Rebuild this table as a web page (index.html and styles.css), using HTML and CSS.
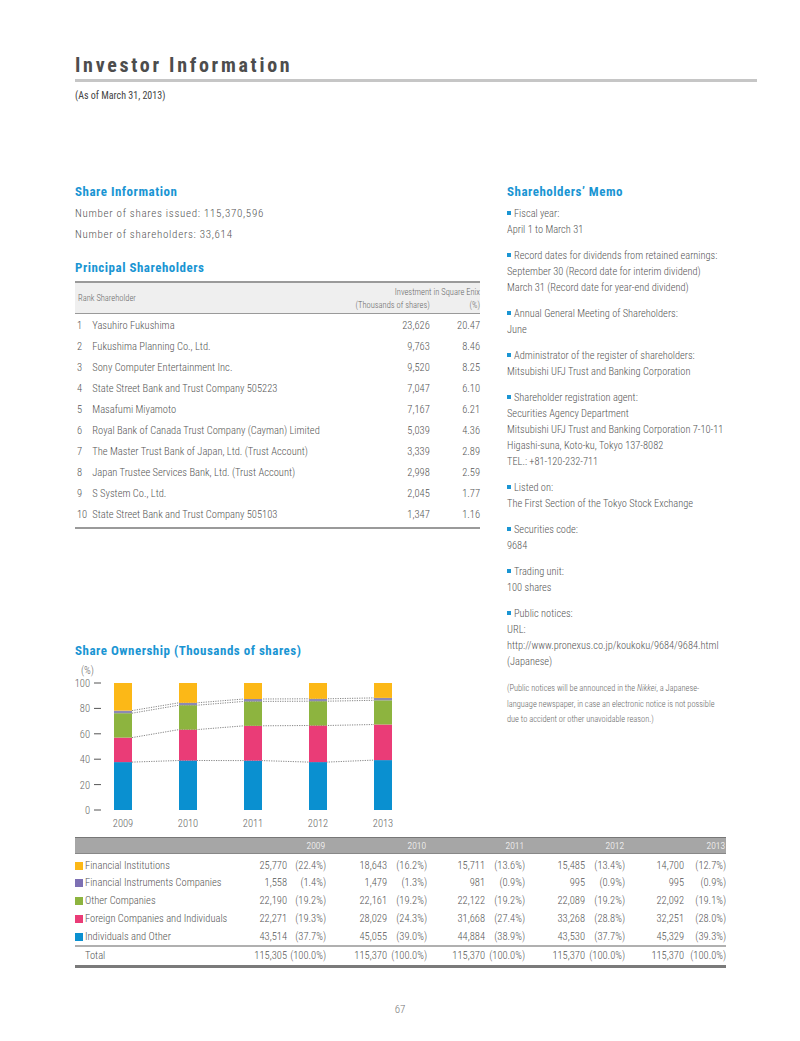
FILE: index.html
```html
<!DOCTYPE html>
<html lang="en">
<head>
<meta charset="utf-8">
<title>Investor Information</title>
<link rel="stylesheet" href="styles.css">
</head>
<body>
<div class="page">
  <header class="head">
    <h1 class="title">Investor Information</h1>
    <p class="asof">(As of March 31, 2013)</p>
  </header>

  <div class="cols">
    <section class="left">
      <h2 class="sec">Share Information</h2>
      <p class="info">Number of shares issued: 115,370,596</p>
      <p class="info">Number of shareholders: 33,614</p>

      <h2 class="sec sec-ps">Principal Shareholders</h2>
      <table class="ps">
        <thead>
          <tr class="ps-h1">
            <th class="ps-rankh" rowspan="2" colspan="2">Rank Shareholder</th>
            <th class="ps-inv" colspan="2">Investment in Square Enix</th>
          </tr>
          <tr class="ps-h2">
            <th class="num">(Thousands of shares)</th>
            <th class="num">(%)</th>
          </tr>
        </thead>
        <tbody>
          <tr><td class="rk">1</td><td class="nm">Yasuhiro Fukushima</td><td class="num">23,626</td><td class="num">20.47</td></tr>
          <tr><td class="rk">2</td><td class="nm">Fukushima Planning Co., Ltd.</td><td class="num">9,763</td><td class="num">8.46</td></tr>
          <tr><td class="rk">3</td><td class="nm">Sony Computer Entertainment Inc.</td><td class="num">9,520</td><td class="num">8.25</td></tr>
          <tr><td class="rk">4</td><td class="nm">State Street Bank and Trust Company 505223</td><td class="num">7,047</td><td class="num">6.10</td></tr>
          <tr><td class="rk">5</td><td class="nm">Masafumi Miyamoto</td><td class="num">7,167</td><td class="num">6.21</td></tr>
          <tr><td class="rk">6</td><td class="nm">Royal Bank of Canada Trust Company (Cayman) Limited</td><td class="num">5,039</td><td class="num">4.36</td></tr>
          <tr><td class="rk">7</td><td class="nm">The Master Trust Bank of Japan, Ltd. (Trust Account)</td><td class="num">3,339</td><td class="num">2.89</td></tr>
          <tr><td class="rk">8</td><td class="nm">Japan Trustee Services Bank, Ltd. (Trust Account)</td><td class="num">2,998</td><td class="num">2.59</td></tr>
          <tr><td class="rk">9</td><td class="nm">S System Co., Ltd.</td><td class="num">2,045</td><td class="num">1.77</td></tr>
          <tr><td class="rk">10</td><td class="nm">State Street Bank and Trust Company 505103</td><td class="num">1,347</td><td class="num">1.16</td></tr>
        </tbody>
      </table>

      <h2 class="sec sec-chart">Share Ownership (Thousands of shares)</h2>
      <svg class="chart" width="405" height="172" viewBox="0 0 405 172">
        <g class="axis">
          <text x="6" y="13">(%)</text>
          <text x="15" y="26" text-anchor="end">100</text>
          <text x="15" y="51.4" text-anchor="end">80</text>
          <text x="15" y="76.8" text-anchor="end">60</text>
          <text x="15" y="102.2" text-anchor="end">40</text>
          <text x="15" y="127.6" text-anchor="end">20</text>
          <text x="15" y="153" text-anchor="end">0</text>
        </g>
        <g class="ticks">
          <line x1="19" y1="22" x2="26" y2="22"/>
          <line x1="19" y1="47.4" x2="26" y2="47.4"/>
          <line x1="19" y1="72.8" x2="26" y2="72.8"/>
          <line x1="19" y1="98.2" x2="26" y2="98.2"/>
          <line x1="19" y1="123.6" x2="26" y2="123.6"/>
          <line x1="19" y1="149" x2="26" y2="149"/>
        </g>
        <g class="dots">
          <polyline points="57,101.1 104,99.5 122,99.5 169,99.6 187,99.6 234,101.1 252,101.1 299,99.1"/>
          <polyline points="57,76.6 104,68.6 122,68.6 169,64.8 187,64.8 234,64.5 252,64.5 299,63.5"/>
          <polyline points="57,52.2 104,44.2 122,44.2 169,40.4 187,40.4 234,40.2 252,40.2 299,39.3"/>
          <polyline points="57,49.6 104,41.8 122,41.8 169,38 187,38 234,37.8 252,37.8 299,36.9"/>
        </g>
        <g class="bar">
          <rect class="c-blue" x="39" y="101.1" width="18" height="47.9"/>
          <rect class="c-pink" x="39" y="76.6" width="18" height="24.5"/>
          <rect class="c-green" x="39" y="52.2" width="18" height="24.4"/>
          <rect class="c-purple" x="39" y="49.6" width="18" height="2.6"/>
          <rect class="c-yellow" x="39" y="22" width="18" height="27.6"/>
        </g>
        <g class="bar">
          <rect class="c-blue" x="104" y="99.5" width="18" height="49.5"/>
          <rect class="c-pink" x="104" y="68.6" width="18" height="30.9"/>
          <rect class="c-green" x="104" y="44.2" width="18" height="24.4"/>
          <rect class="c-purple" x="104" y="41.8" width="18" height="2.4"/>
          <rect class="c-yellow" x="104" y="22" width="18" height="19.8"/>
        </g>
        <g class="bar">
          <rect class="c-blue" x="169" y="99.6" width="18" height="49.4"/>
          <rect class="c-pink" x="169" y="64.8" width="18" height="34.8"/>
          <rect class="c-green" x="169" y="40.4" width="18" height="24.4"/>
          <rect class="c-purple" x="169" y="38" width="18" height="2.4"/>
          <rect class="c-yellow" x="169" y="22" width="18" height="16"/>
        </g>
        <g class="bar">
          <rect class="c-blue" x="234" y="101.1" width="18" height="47.9"/>
          <rect class="c-pink" x="234" y="64.5" width="18" height="36.6"/>
          <rect class="c-green" x="234" y="40.2" width="18" height="24.3"/>
          <rect class="c-purple" x="234" y="37.8" width="18" height="2.4"/>
          <rect class="c-yellow" x="234" y="22" width="18" height="15.8"/>
        </g>
        <g class="bar">
          <rect class="c-blue" x="299" y="99.1" width="18" height="49.9"/>
          <rect class="c-pink" x="299" y="63.5" width="18" height="35.6"/>
          <rect class="c-green" x="299" y="39.3" width="18" height="24.2"/>
          <rect class="c-purple" x="299" y="36.9" width="18" height="2.4"/>
          <rect class="c-yellow" x="299" y="22" width="18" height="14.9"/>
        </g>
        <g class="axis years">
          <text x="48" y="166" text-anchor="middle">2009</text>
          <text x="113" y="166" text-anchor="middle">2010</text>
          <text x="178" y="166" text-anchor="middle">2011</text>
          <text x="243" y="166" text-anchor="middle">2012</text>
          <text x="308" y="166" text-anchor="middle">2013</text>
        </g>
      </svg>
    </section>

    <section class="right">
      <h2 class="sec">Shareholders’ Memo</h2>
      <div class="memo">
        <p class="item"><span class="lbl">Fiscal year:</span><br>April 1 to March 31</p>
        <p class="item"><span class="lbl">Record dates for dividends from retained earnings:</span><br>September 30 (Record date for interim dividend)<br>March 31 (Record date for year-end dividend)</p>
        <p class="item"><span class="lbl">Annual General Meeting of Shareholders:</span><br>June</p>
        <p class="item"><span class="lbl">Administrator of the register of shareholders:</span><br>Mitsubishi UFJ Trust and Banking Corporation</p>
        <p class="item"><span class="lbl">Shareholder registration agent:</span><br>Securities Agency Department<br>Mitsubishi UFJ Trust and Banking Corporation 7-10-11<br>Higashi-suna, Koto-ku, Tokyo 137-8082<br>TEL.: +81-120-232-711</p>
        <p class="item"><span class="lbl">Listed on:</span><br>The First Section of the Tokyo Stock Exchange</p>
        <p class="item"><span class="lbl">Securities code:</span><br>9684</p>
        <p class="item"><span class="lbl">Trading unit:</span><br>100 shares</p>
        <p class="item"><span class="lbl">Public notices:</span><br>URL:<br>http://www.pronexus.co.jp/koukoku/9684/9684.html<br>(Japanese)</p>
        <p class="note">(Public notices will be announced in the <i>Nikkei</i>, a Japanese-<br>language newspaper, in case an electronic notice is not possible<br>due to accident or other unavoidable reason.)</p>
      </div>
    </section>
  </div>

  <table class="own">
    <colgroup>
      <col class="w-lbl"><col class="w-v1"><col class="w-p1"><col class="w-v2"><col class="w-p2"><col class="w-v3"><col class="w-p3"><col class="w-v4"><col class="w-p4"><col class="w-v5"><col class="w-p5">
    </colgroup>
    <thead>
      <tr><th></th><th colspan="2">2009</th><th colspan="2">2010</th><th colspan="2">2011</th><th colspan="2">2012</th><th colspan="2">2013</th></tr>
    </thead>
    <tbody>
      <tr><td><span class="sw c-yellow-bg"></span>Financial Institutions</td><td>25,770</td><td>(22.4%)</td><td>18,643</td><td>(16.2%)</td><td>15,711</td><td>(13.6%)</td><td>15,485</td><td>(13.4%)</td><td>14,700</td><td>(12.7%)</td></tr>
      <tr><td><span class="sw c-purple-bg"></span>Financial Instruments Companies</td><td>1,558</td><td>(1.4%)</td><td>1,479</td><td>(1.3%)</td><td>981</td><td>(0.9%)</td><td>995</td><td>(0.9%)</td><td>995</td><td>(0.9%)</td></tr>
      <tr><td><span class="sw c-green-bg"></span>Other Companies</td><td>22,190</td><td>(19.2%)</td><td>22,161</td><td>(19.2%)</td><td>22,122</td><td>(19.2%)</td><td>22,089</td><td>(19.2%)</td><td>22,092</td><td>(19.1%)</td></tr>
      <tr><td><span class="sw c-pink-bg"></span>Foreign Companies and Individuals</td><td>22,271</td><td>(19.3%)</td><td>28,029</td><td>(24.3%)</td><td>31,668</td><td>(27.4%)</td><td>33,268</td><td>(28.8%)</td><td>32,251</td><td>(28.0%)</td></tr>
      <tr><td><span class="sw c-blue-bg"></span>Individuals and Other</td><td>43,514</td><td>(37.7%)</td><td>45,055</td><td>(39.0%)</td><td>44,884</td><td>(38.9%)</td><td>43,530</td><td>(37.7%)</td><td>45,329</td><td>(39.3%)</td></tr>
      <tr class="total"><td class="tl">Total</td><td>115,305</td><td>(100.0%)</td><td>115,370</td><td>(100.0%)</td><td>115,370</td><td>(100.0%)</td><td>115,370</td><td>(100.0%)</td><td>115,370</td><td>(100.0%)</td></tr>
    </tbody>
  </table>

  <footer class="pno">67</footer>
</div>
</body>
</html>
```

FILE: styles.css
```css
* { box-sizing: border-box; }
html, body { margin: 0; padding: 0; background: #fff; }
body {
  font-family: "Roboto Condensed", "Open Sans", "Liberation Sans", sans-serif;
  font-weight: 300;
  color: #555;
  width: 800px;
}
.page { padding: 52px 43px 0 75px; }

.title {
  margin: 0;
  font-size: 20px;
  line-height: 26px;
  font-weight: bold;
  letter-spacing: 2.7px;
  color: #4d4d4d;
  padding-bottom: 1px;
  border-bottom: 3px solid #c6c6c6;
}
.asof { margin: 7px 0 0; font-size: 10px; line-height: 14px; color: #444; font-weight: 400; }

.cols {
  display: grid;
  grid-template-columns: 405px 250px;
  column-gap: 27px;
  margin-top: 81px;
}

.sec {
  margin: 0;
  font-size: 13px;
  line-height: 16px;
  font-weight: bold;
  color: #1a95d3;
  letter-spacing: 0.5px;
}
.info { margin: 0; font-size: 11px; line-height: 21px; letter-spacing: 0.7px; color: #555; font-weight: 300; }
.left .sec:first-child + .info { margin-top: 3px; }
.sec-ps { margin-top: 15px; margin-bottom: 5px; }

.ps { width: 405px; border-collapse: collapse; font-size: 10.5px; color: #555; }
.ps thead th { background: #efefef; font-weight: 300; font-size: 8.5px; color: #666; padding: 0; }
.ps-h1 th { border-top: 2px solid #9a9a9a; }
.ps-h2 th, .ps-rankh { border-bottom: 1px solid #9a9a9a; }
.ps-rankh { text-align: left; padding-left: 3px !important; vertical-align: middle; height: 31px; }
.ps-inv { text-align: right; height: 17px; vertical-align: bottom; padding-bottom: 2px !important; }
.ps-h2 th { height: 14px; vertical-align: top; padding-top: 1px !important; }
.ps .num { text-align: right; }
.ps tbody td { height: 21px; padding: 0; vertical-align: middle; white-space: nowrap; }
.ps tbody tr:first-child td { padding-top: 2px; height: 23px; }
.ps tbody tr:last-child td { border-bottom: 2px solid #9a9a9a; height: 24px; padding-bottom: 3px; }
.rk { width: 18px; text-align: left; padding-left: 2px !important; }
.nm { text-align: left; }
.ps tbody td:nth-child(3) { width: 120px; }
.ps tbody td:nth-child(4) { width: 54px; }

.sec-chart { margin-top: 114px; }
.chart { display: block; margin-top: 2px; }
.axis text { font-size: 10.5px; fill: #666; font-weight: 300; font-family: "Roboto Condensed", sans-serif; }
.ticks line { stroke: #555; stroke-width: 1; }
.dots polyline { fill: none; stroke: #666; stroke-width: 0.8; stroke-dasharray: 1.2 1.2; }
.c-blue { fill: #0a90d0; }
.c-pink { fill: #ea3c77; }
.c-green { fill: #8db43f; }
.c-purple { fill: #8c89b4; }
.c-yellow { fill: #fcb817; }

.memo { margin-top: 6px; font-size: 10.4px; line-height: 16px; color: #555; }
.item { margin: 0 0 10px; }
.lbl::before {
  content: "";
  display: inline-block;
  width: 4px; height: 4px;
  background: #1a95d3;
  margin-right: 3px;
  vertical-align: 2px;
}
.note { margin: 11px 0 0; font-size: 8.4px; line-height: 15.5px; color: #666; }

.own {
  width: 651px;
  table-layout: fixed;
  border-collapse: collapse;
  margin-top: 4px;
  font-size: 10.5px;
  color: #555;
}
.w-lbl { width: 155px; }
.w-v1 { width: 57px; } .w-p1 { width: 39px; }
.w-v2 { width: 61px; } .w-p2 { width: 40px; }
.w-v3 { width: 58px; } .w-p3 { width: 40px; }
.w-v4 { width: 60px; } .w-p4 { width: 40px; }
.w-v5 { width: 59px; } .w-p5 { width: 42px; }
.own thead th {
  background: #a6a6a6;
  border-top: 1px solid #777;
  border-bottom: 1px solid #888;
  color: #fff;
  font-weight: 300;
  font-size: 9.5px;
  height: 16px;
  padding: 0 1px 0 0;
  text-align: right;
}
.own td { height: 18px; padding: 0; text-align: right; white-space: nowrap; }
.own td:first-child { text-align: left; }
.own tbody tr:first-child td { padding-top: 3px; height: 20px; }
.sw { display: inline-block; width: 8px; height: 8px; margin-right: 2px; vertical-align: -1px; }
.c-yellow-bg { background: #fcb817; }
.c-purple-bg { background: #7d70b3; }
.c-green-bg { background: #8db43f; }
.c-pink-bg { background: #ea3c77; }
.c-blue-bg { background: #0a90d0; }
.own .total td { border-top: 2px solid #b0b0b0; border-bottom: 3px solid #7a7a7a; height: 21px; }
.own .total .tl { padding-left: 10px; }

.pno { text-align: center; margin: 35px 0 0 -75px; width: 800px; font-size: 11px; color: #777; }
```
